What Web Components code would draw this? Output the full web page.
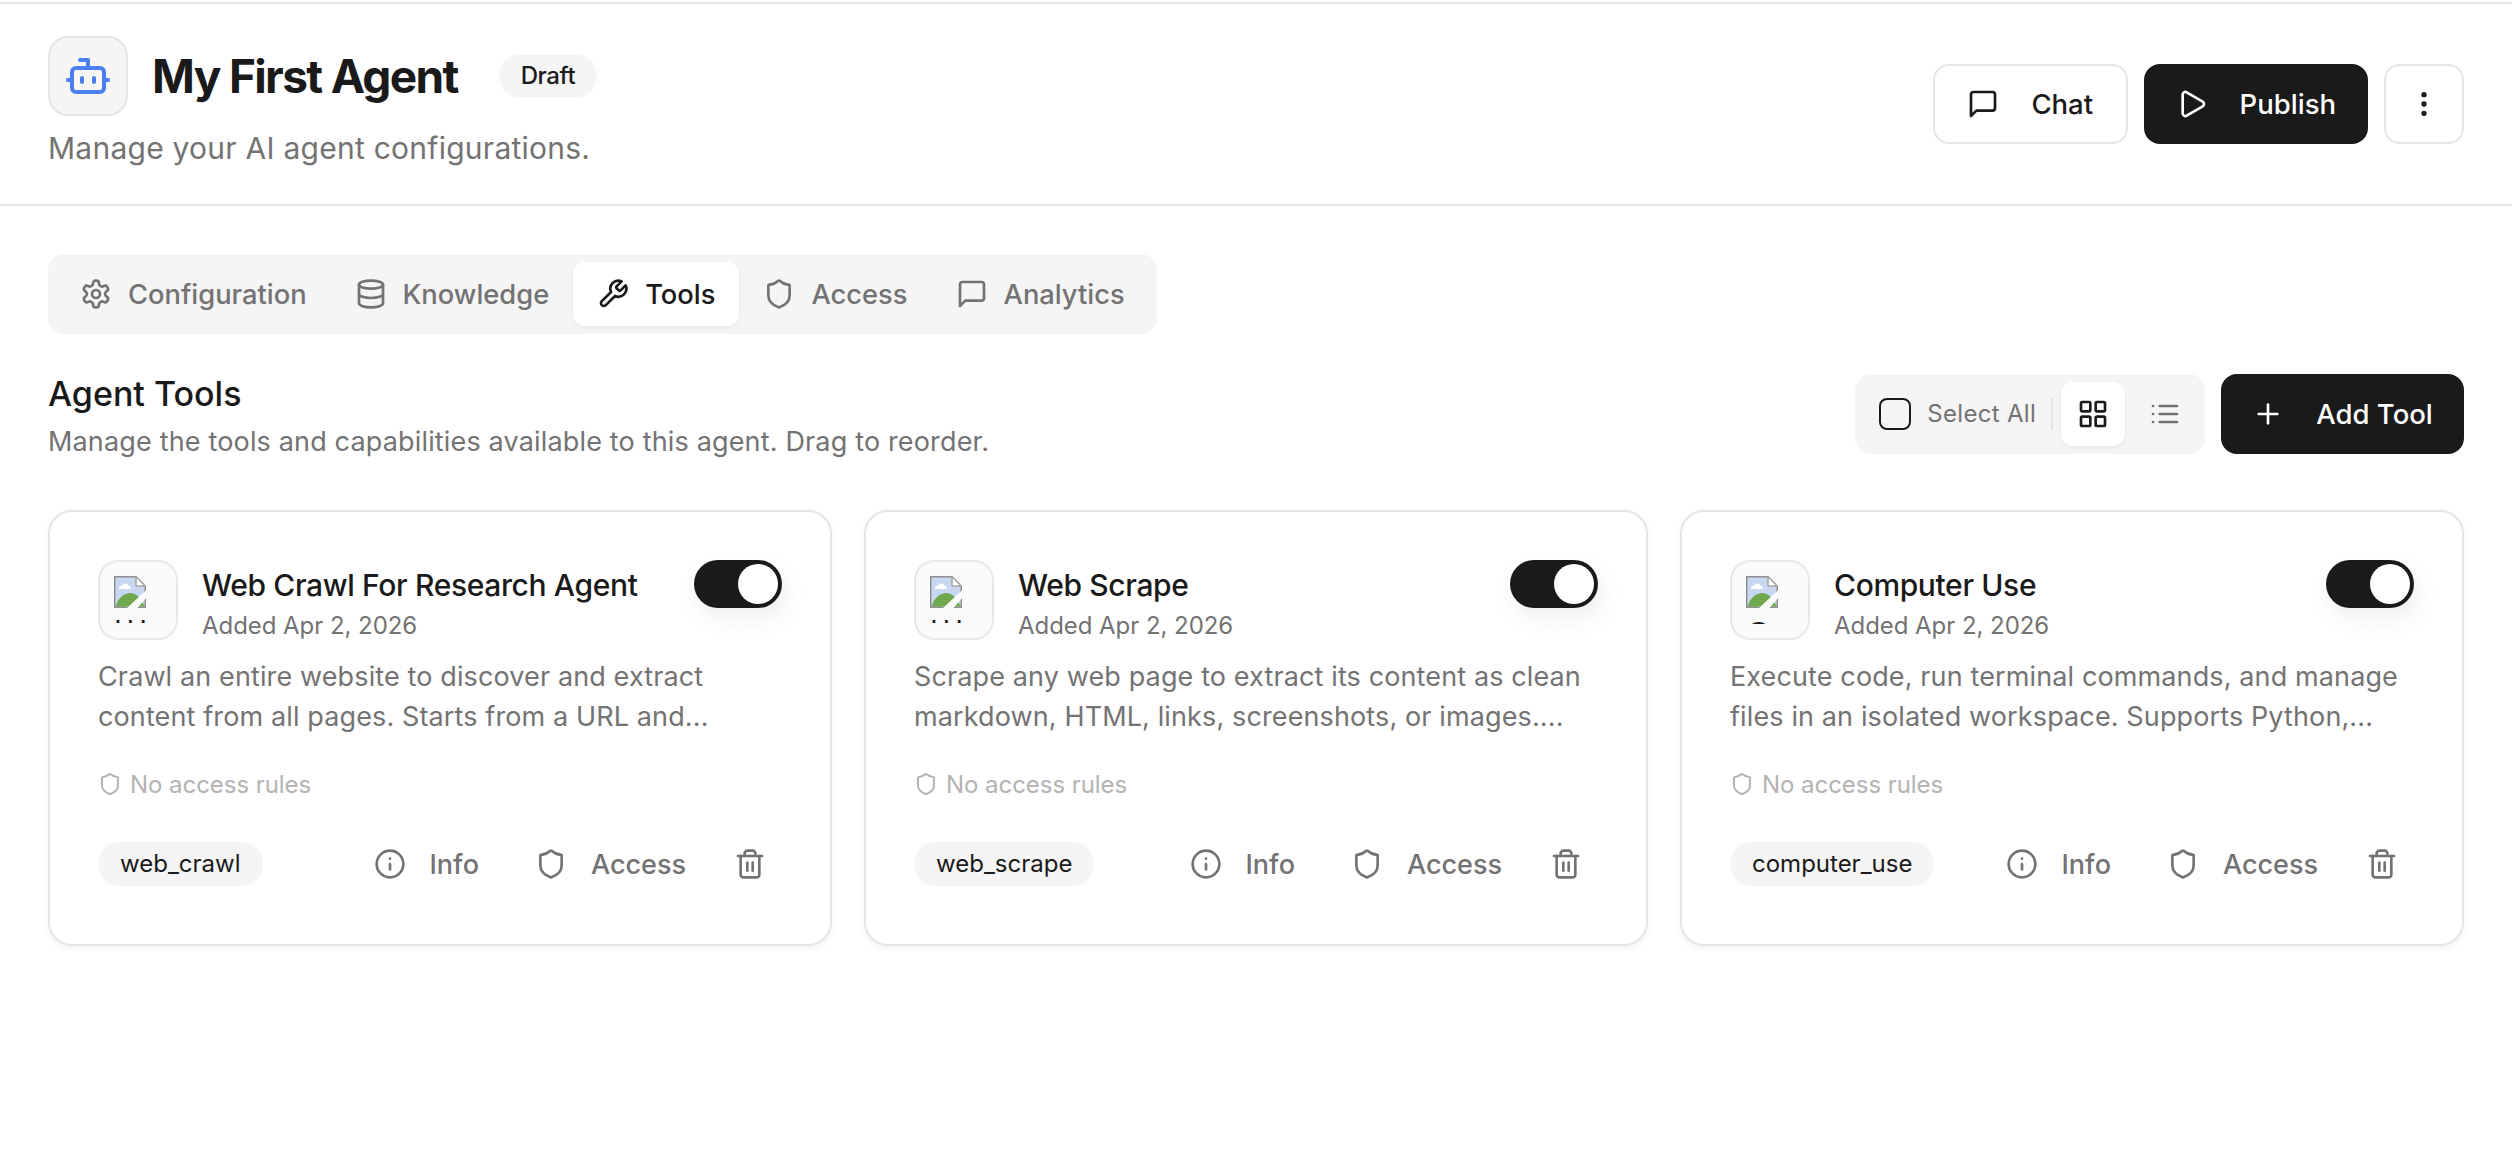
<!DOCTYPE html>
<html lang="en">
<head>
<meta charset="utf-8">
<title>My First Agent</title>
<style>
html,body{margin:0;padding:0;background:#fff;color:#1a1a1a;font-family:Inter,"Liberation Sans",sans-serif;}
</style>
</head>
<body>
<agent-page></agent-page>
<script>
const ICONS={
 bot:'<path d="M12 8V4H8"/><rect width="16" height="12" x="4" y="8" rx="2"/><path d="M2 14h2"/><path d="M20 14h2"/><path d="M15 13v2"/><path d="M9 13v2"/>',
 settings:'<path d="M12.22 2h-.44a2 2 0 0 0-2 2v.18a2 2 0 0 1-1 1.73l-.43.25a2 2 0 0 1-2 0l-.15-.08a2 2 0 0 0-2.73.73l-.22.38a2 2 0 0 0 .73 2.73l.15.1a2 2 0 0 1 1 1.72v.51a2 2 0 0 1-1 1.74l-.15.09a2 2 0 0 0-.73 2.73l.22.38a2 2 0 0 0 2.73.73l.15-.08a2 2 0 0 1 2 0l.43.25a2 2 0 0 1 1 1.73V20a2 2 0 0 0 2 2h.44a2 2 0 0 0 2-2v-.18a2 2 0 0 1 1-1.73l.43-.25a2 2 0 0 1 2 0l.15.08a2 2 0 0 0 2.73-.73l.22-.39a2 2 0 0 0-.73-2.73l-.15-.08a2 2 0 0 1-1-1.74v-.5a2 2 0 0 1 1-1.74l.15-.09a2 2 0 0 0 .73-2.73l-.22-.38a2 2 0 0 0-2.73-.73l-.15.08a2 2 0 0 1-2 0l-.43-.25a2 2 0 0 1-1-1.73V4a2 2 0 0 0-2-2z"/><circle cx="12" cy="12" r="3"/>',
 database:'<ellipse cx="12" cy="5" rx="9" ry="3"/><path d="M3 5V19A9 3 0 0 0 21 19V5"/><path d="M3 12A9 3 0 0 0 21 12"/>',
 wrench:'<path d="M14.7 6.3a1 1 0 0 0 0 1.4l1.6 1.6a1 1 0 0 0 1.4 0l3.77-3.77a6 6 0 0 1-7.94 7.94l-6.91 6.91a2.12 2.12 0 0 1-3-3l6.91-6.91a6 6 0 0 1 7.94-7.94l-3.76 3.76z"/>',
 shield:'<path d="M20 13c0 5-3.5 7.5-7.66 8.95a1 1 0 0 1-.67-.01C7.5 20.5 4 18 4 13V6a1 1 0 0 1 1-1c2 0 4.5-1.2 6.24-2.72a1.17 1.17 0 0 1 1.52 0C14.51 3.81 17 5 19 5a1 1 0 0 1 1 1z"/>',
 message:'<path d="M21 15a2 2 0 0 1-2 2H7l-4 4V5a2 2 0 0 1 2-2h14a2 2 0 0 1 2 2z"/>',
 play:'<path d="M5 5a2 2 0 0 1 3.008-1.728l11.997 6.998a2 2 0 0 1 .003 3.458l-12 7A2 2 0 0 1 5 19z"/>',
 more:'<circle cx="12" cy="12" r="1"/><circle cx="12" cy="5" r="1"/><circle cx="12" cy="19" r="1"/>',
 plus:'<path d="M5 12h14"/><path d="M12 5v14"/>',
 grid:'<rect width="7" height="7" x="3" y="3" rx="1"/><rect width="7" height="7" x="14" y="3" rx="1"/><rect width="7" height="7" x="14" y="14" rx="1"/><rect width="7" height="7" x="3" y="14" rx="1"/>',
 list:'<path d="M3 12h.01"/><path d="M3 18h.01"/><path d="M3 6h.01"/><path d="M8 12h13"/><path d="M8 18h13"/><path d="M8 6h13"/>',
 info:'<circle cx="12" cy="12" r="10"/><path d="M12 16v-4"/><path d="M12 8h.01"/>',
 trash:'<path d="M3 6h18"/><path d="M19 6v14c0 1-1 2-2 2H7c-1 0-2-1-2-2V6"/><path d="M8 6V4c0-1 1-2 2-2h4c1 0 2 1 2 2v2"/><line x1="10" x2="10" y1="11" y2="17"/><line x1="14" x2="14" y1="11" y2="17"/>'
};
function shadow(el,html){const r=el.attachShadow({mode:'open'});r.innerHTML=html;return r;}

class XIcon extends HTMLElement{
 connectedCallback(){
  if(this.shadowRoot)return;
  const s=this.getAttribute('size')||32,n=this.getAttribute('name');
  shadow(this,`<style>:host{display:inline-flex;flex:none;width:${s}px;height:${s}px}svg{display:block}</style>
  <svg xmlns="http://www.w3.org/2000/svg" width="${s}" height="${s}" viewBox="0 0 24 24" fill="none" stroke="currentColor" stroke-width="2" stroke-linecap="round" stroke-linejoin="round">${ICONS[n]}</svg>`);
 }
}
customElements.define('x-icon',XIcon);

class XButton extends HTMLElement{
 connectedCallback(){
  if(this.shadowRoot)return;
  const ic=this.getAttribute('icon'),p=this.getAttribute('pad')||30;
  shadow(this,`<style>
  :host{display:inline-flex;flex:none;align-items:center;justify-content:center;gap:32px;height:80px;box-sizing:border-box;padding:0 ${p}px;border-radius:16px;font-size:27.5px;font-weight:500;line-height:40px;border:2px solid #e5e5e5;background:#fff;color:#1a1a1a;white-space:nowrap}
  :host([variant=dark]){background:#1a1a1a;border-color:#1a1a1a;color:#fff}
  :host([square]){width:80px;padding:0}
  </style><x-icon name="${ic}"></x-icon><slot></slot>`);
 }
}
customElements.define('x-button',XButton);

class TabItem extends HTMLElement{
 connectedCallback(){
  if(this.shadowRoot)return;
  shadow(this,`<style>
  :host{display:inline-flex;align-items:center;gap:16px;height:64px;padding:0 24px;border-radius:12px;font-size:27.3px;font-weight:500;color:#737373;white-space:nowrap}
  :host([active]){background:#fff;color:#1a1a1a;box-shadow:0 2px 4px rgba(0,0,0,.06)}
  </style><x-icon name="${this.getAttribute('icon')}"></x-icon><slot></slot>`);
 }
}
customElements.define('tab-item',TabItem);

class TabBar extends HTMLElement{
 connectedCallback(){
  if(this.shadowRoot)return;
  shadow(this,`<style>:host{display:inline-flex;align-items:center;height:80px;box-sizing:border-box;padding:8px;background:#f5f5f5;border-radius:16px}</style><slot></slot>`);
 }
}
customElements.define('tab-bar',TabBar);

class AgentHeader extends HTMLElement{
 connectedCallback(){
  if(this.shadowRoot)return;
  shadow(this,`<style>
  :host{display:flex;align-items:center;justify-content:space-between;margin-top:2px;border-top:2px solid #e5e5e5;border-bottom:2px solid #e5e5e5;padding:32px 48px}
  .row{display:flex;align-items:center}
  .logo{width:80px;height:80px;box-sizing:border-box;border:2px solid #e5e5e5;border-radius:20px;background:#f5f5f5;display:flex;align-items:center;justify-content:center;color:#4a7ff0}
  h1{margin:0 0 0 24px;font-size:46px;line-height:64px;font-weight:700;letter-spacing:-.036em;color:#1a1a1a}
  .badge{margin-left:41px;height:44px;padding:0 22px;border-radius:22px;background:#f5f5f5;font-size:24px;font-weight:500;line-height:44px;color:#1a1a1a;letter-spacing:-.4px}
  p{margin:12px 0 4px;font-size:30px;line-height:40px;color:#737373;letter-spacing:.25px}
  .actions{display:flex;gap:16px;align-items:center}
  </style>
  <div><div class="row"><div class="logo"><x-icon name="bot" size="48"></x-icon></div><h1>My First Agent</h1><span class="badge">Draft</span></div>
  <p>Manage your AI agent configurations.</p></div>
  <div class="actions"><x-button icon="message" pad="32.5">Chat</x-button><x-button icon="play" variant="dark">Publish</x-button><x-button icon="more" square></x-button></div>`);
 }
}
customElements.define('agent-header',AgentHeader);

class ToolToolbar extends HTMLElement{
 connectedCallback(){
  if(this.shadowRoot)return;
  shadow(this,`<style>
  :host{display:flex;align-items:center;height:80px;box-sizing:border-box;padding:8px;background:#f5f5f5;border-radius:16px;color:#737373}
  .sel{display:flex;align-items:center;gap:16px;padding:0 15px 0 16px;font-size:24px;line-height:32px;font-weight:400;letter-spacing:.3px}
  .box{width:32px;height:32px;box-sizing:border-box;border:2px solid #1a1a1a;border-radius:8px;background:#fff0}
  .div{width:2px;height:32px;background:#e5e5e5;margin-right:8px}
  .v{width:64px;height:64px;display:flex;align-items:center;justify-content:center;border-radius:12px}
  .on{background:#fff;color:#1a1a1a;box-shadow:0 2px 4px rgba(0,0,0,.06);margin-right:8px}
  </style>
  <div class="sel"><span class="box"></span><span>Select All</span></div><span class="div"></span>
  <span class="v on"><x-icon name="grid"></x-icon></span><span class="v"><x-icon name="list"></x-icon></span>`);
 }
}
customElements.define('tool-toolbar',ToolToolbar);

class ToolGlyph extends HTMLElement{
 connectedCallback(){
  if(this.shadowRoot)return;
  const alt=this.getAttribute('alt');
  shadow(this,`<style>
  :host{display:block;width:48px;height:48px;overflow:hidden;font-family:"Liberation Sans",sans-serif;color:#1a1a1a}
  svg{display:block}
  .alt{display:block;white-space:nowrap;font-size:28px;line-height:12px;letter-spacing:4.8px;margin-left:0}
  :host([word]) .alt{font-size:30px;line-height:48px;letter-spacing:0;margin-left:1px}
  </style>
  <svg xmlns="http://www.w3.org/2000/svg" width="32" height="32" viewBox="0 0 32 32">
   <path d="M.75.75H22L31.25 10V31.25H.75z" fill="#c8d8f3" stroke="#8f8f8f" stroke-width="1.5"/>
   <path d="M22 .75V10H31.250z" fill="#fff" stroke="#a8a8a8" stroke-width="1.5" stroke-linejoin="round"/>
   <path d="M5 13c-.5-2 1-3.500 3-3.200C9 7 13.500 6.500 14.500 9.500c1.500 0 2.500 1.700 2 3.500z" fill="#fff"/>
   <path d="M1.500 30.500C4 22 10 17 16 17c6 0 11 5 14.500 13.500z" fill="#6fa84f"/>
   <path d="M13 32 32 14.500V22L23.500 32z" fill="#fff"/>
  </svg><span class="alt">${alt}</span>`);
 }
}
customElements.define('tool-glyph',ToolGlyph);

class ToggleSwitch extends HTMLElement{
 connectedCallback(){
  if(this.shadowRoot)return;
  shadow(this,`<style>
  :host{display:block;flex:none;width:88px;height:48px;border-radius:24px;background:#1a1a1a;position:relative;box-shadow:4px 10px 24px rgba(0,0,0,.07)}
  i{position:absolute;top:4px;right:4px;width:40px;height:40px;border-radius:50%;background:#fff}
  </style><i></i>`);
 }
}
customElements.define('toggle-switch',ToggleSwitch);

class ToolCard extends HTMLElement{
 connectedCallback(){
  if(this.shadowRoot)return;
  const a=k=>this.getAttribute(k);
  shadow(this,`<style>
  :host{display:flex;flex-direction:column;box-sizing:border-box;height:436px;padding:48px;border:2px solid #e5e5e5;border-radius:24px;background:#fff;box-shadow:0 2px 6px rgba(0,0,0,.06)}
  .top{display:flex;align-items:flex-start;height:80px}
  .glyph{width:80px;height:80px;flex:none;box-sizing:border-box;padding:14px;border:2px solid #e8e8e8;border-radius:20px;background:#fafafa}
  .meta{flex:1;min-width:0;margin-left:24px}
  .name{font-size:30px;line-height:44px;font-weight:500;color:#1a1a1a;margin-top:3px;white-space:nowrap;letter-spacing:-.012em}
  .date{font-size:24px;line-height:32px;color:#737373;margin-top:3px;letter-spacing:-.05px}
  .desc{margin:17px 0 0;font-size:27px;line-height:40px;color:#737373;height:80px;white-space:pre-line;letter-spacing:.12px}
  .rules{display:flex;align-items:center;gap:8px;margin-top:32px;height:32px;font-size:24px;color:#b3b3b3;letter-spacing:-.05px}
  .foot{display:flex;align-items:center;margin-top:33px;height:64px}
  .pill{height:44px;line-height:44px;padding:0 22px;border-radius:22px;background:#f5f5f5;font-size:24px;color:#1a1a1a;font-weight:400}
  .sp{flex:1}
  .act{display:inline-flex;align-items:center;gap:24px;height:64px;padding:0 16px;font-size:27px;font-weight:500;color:#737373;margin-left:24px}
  .trash{gap:0;margin-left:16px}
  </style>
  <div class="top"><div class="glyph"><slot name="glyph"></slot></div>
   <div class="meta"><div class="name">${a('title')}</div><div class="date">Added Apr 2, 2026</div></div>
   <toggle-switch></toggle-switch></div>
  <p class="desc"><slot></slot></p>
  <div class="rules"><x-icon name="shield" size="24"></x-icon><span>No access rules</span></div>
  <div class="foot"><span class="pill">${a('slug')}</span><span class="sp"></span>
   <span class="act"><x-icon name="info"></x-icon>Info</span>
   <span class="act"><x-icon name="shield"></x-icon>Access</span>
   <span class="act trash"><x-icon name="trash"></x-icon></span></div>`);
 }
}
customElements.define('tool-card',ToolCard);

class AgentPage extends HTMLElement{
 connectedCallback(){
  if(this.shadowRoot)return;
  shadow(this,`<style>
  :host{display:block;font-family:Inter,"Liberation Sans",sans-serif}
  main{padding:48px}
  .head{display:flex;align-items:flex-start;justify-content:space-between;margin-top:40px}
  h2{margin:0;font-size:34px;line-height:40px;font-weight:500;color:#1a1a1a}
  .sub{margin:8px 0 0;font-size:27px;line-height:40px;color:#737373;letter-spacing:.16px}
  .right{display:flex;gap:16px}
  .cards{display:grid;grid-template-columns:repeat(3,1fr);gap:32px;margin-top:48px}
  </style>
  <agent-header></agent-header>
  <main>
   <tab-bar><tab-item icon="settings">Configuration</tab-item><tab-item icon="database">Knowledge</tab-item><tab-item icon="wrench" active>Tools</tab-item><tab-item icon="shield">Access</tab-item><tab-item icon="message">Analytics</tab-item></tab-bar>
   <div class="head"><div><h2>Agent Tools</h2><p class="sub">Manage the tools and capabilities available to this agent. Drag to reorder.</p></div>
    <div class="right"><tool-toolbar></tool-toolbar><x-button icon="plus" variant="dark" pad="29.2">Add Tool</x-button></div></div>
   <div class="cards">
    <tool-card title="Web Crawl For Research Agent" slug="web_crawl"><tool-glyph slot="glyph" alt="..."></tool-glyph>Crawl an entire website to discover and extract
content from all pages. Starts from a URL and...</tool-card>
    <tool-card title="Web Scrape" slug="web_scrape"><tool-glyph slot="glyph" alt="..."></tool-glyph>Scrape any web page to extract its content as clean
markdown, HTML, links, screenshots, or images....</tool-card>
    <tool-card title="Computer Use" slug="computer_use"><tool-glyph slot="glyph" alt="C" word></tool-glyph>Execute code, run terminal commands, and manage
files in an isolated workspace. Supports Python,...</tool-card>
   </div>
  </main>`);
 }
}
customElements.define('agent-page',AgentPage);
</script>
</body>
</html>
